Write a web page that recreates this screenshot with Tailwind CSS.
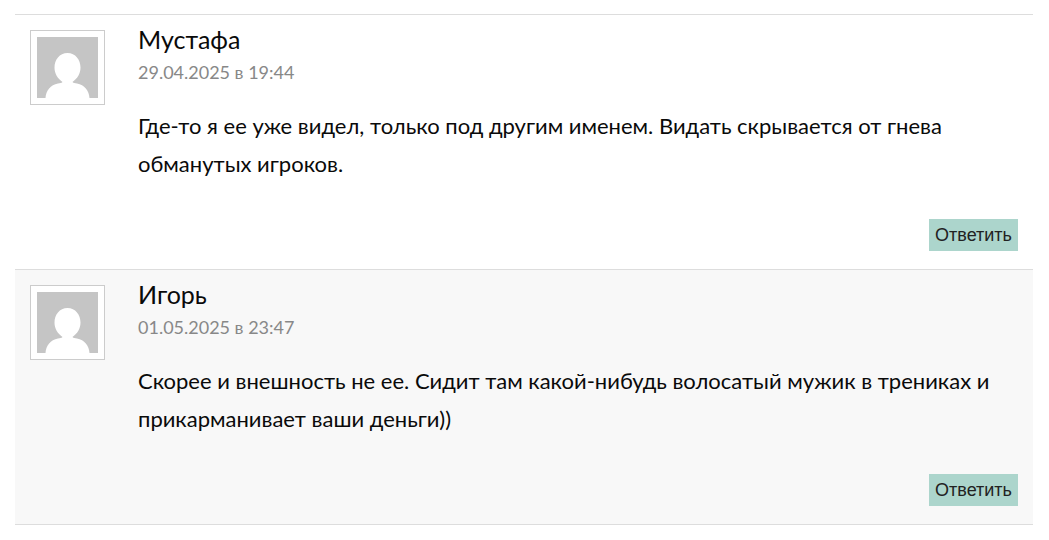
<!DOCTYPE html>
<html lang="ru">
<head>
<meta charset="utf-8">
<title>Комментарии</title>
<script src="https://cdn.jsdelivr.net/npm/@tailwindcss/browser@4"></script>
</head>
<body class="bg-white font-['Lato','Open_Sans',sans-serif] text-[#0a0a0a]">
<ol class="mx-4 mt-3.5 -ml-px pl-4">
  <li class="flex gap-[33px] border-t border-[#ddd] px-[15px] pt-[15px] pb-[18px]">
    <svg class="size-[75px] shrink-0 border border-[#ccc] bg-white p-1.5" viewBox="0 0 61 61" role="img" aria-label="Мустафа">
      <path fill="#c5c5c5" d="M0 0h61v61H0z"/>
      <path fill="#fff" d="M30.5 16C22.500 16 17.5 23 17.5 30.5C17.5 36.5 20.5 41.5 25.5 45C24.5 46 23 46.3 21 46.5C13.5 48 9 53.5 8.500 61H52.5C52 53.5 47.5 48 40 46.5C38 46.3 36.5 46 35.5 45C40.5 41.5 43.5 36.5 43.5 30.5C43.5 23 38.5 16 30.5 16Z"/>
    </svg>
    <div class="min-w-0 grow">
      <h3 class="text-[25px] leading-[18px]">Мустафа</h3>
      <time class="mt-2.5 block text-lg leading-7 text-[#888]">29.04.2025 в 19:44</time>
      <p class="mt-[21px] text-[22px] leading-[38px]">Где-то я ее уже видел, только под другим именем. Видать скрывается от гнева обманутых игроков.</p>
      <div class="mt-9 flex justify-end"><button class="h-8 bg-[#acd5cc] px-1.5 font-['Liberation_Sans',sans-serif] text-lg leading-8 text-[#222]">Ответить</button></div>
    </div>
  </li>
  <li class="flex gap-[33px] border-y border-[#ddd] bg-[#f8f8f8] px-[15px] pt-[15px] pb-[18px]">
    <svg class="size-[75px] shrink-0 border border-[#ccc] bg-white p-1.5" viewBox="0 0 61 61" role="img" aria-label="Игорь">
      <path fill="#c5c5c5" d="M0 0h61v61H0z"/>
      <path fill="#fff" d="M30.5 16C22.500 16 17.5 23 17.5 30.5C17.5 36.5 20.5 41.5 25.5 45C24.5 46 23 46.3 21 46.5C13.5 48 9 53.5 8.500 61H52.5C52 53.5 47.5 48 40 46.5C38 46.3 36.5 46 35.5 45C40.5 41.5 43.5 36.5 43.5 30.5C43.5 23 38.5 16 30.5 16Z"/>
    </svg>
    <div class="min-w-0 grow">
      <h3 class="text-[25px] leading-[18px]">Игорь</h3>
      <time class="mt-2.5 block text-lg leading-7 text-[#888]">01.05.2025 в 23:47</time>
      <p class="mt-[21px] text-[22px] leading-[38px]">Скорее и внешность не ее. Сидит там какой-нибудь волосатый мужик в трениках и прикарманивает ваши деньги))</p>
      <div class="mt-9 flex justify-end"><button class="h-8 bg-[#acd5cc] px-1.5 font-['Liberation_Sans',sans-serif] text-lg leading-8 text-[#222]">Ответить</button></div>
    </div>
  </li>
</ol>
</body>
</html>
